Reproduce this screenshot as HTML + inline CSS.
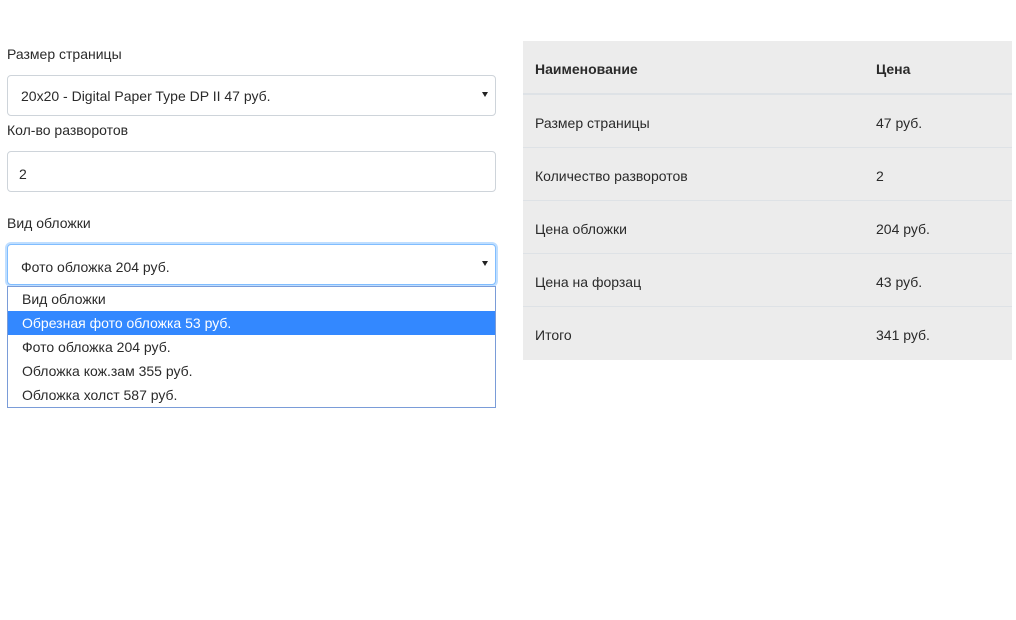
<!DOCTYPE html>
<html><head><meta charset="utf-8"><style>
body{margin:0;width:1016px;height:620px;background:#fff;font-family:"Liberation Sans","Noto Sans CJK SC",sans-serif;color:#2a2a2a;font-size:14px;position:relative;overflow:hidden}
.a{position:absolute;white-space:nowrap}
.box{position:absolute;left:7px;width:487px;border:1px solid #ced4da;border-radius:4px;background:#fff}
.arr{position:absolute;right:7px;top:16px;width:0;height:0;border-left:3px solid transparent;border-right:3px solid transparent;border-top:5px solid #222}
.opt{position:absolute;left:0;width:487px;height:24px;line-height:25px;padding-left:14px;box-sizing:border-box;font-size:14px}
.tb{position:absolute;left:523px;top:41px;width:489px;height:319px;background:#ececec}
.row{position:absolute;left:0;width:489px;border-top:2px solid #dee2e6}
</style></head><body>
<div class="a" style="left:7px;top:46px">Размер страницы</div>
<div class="box" style="top:75px;height:39px"><div class="a" style="left:13px;top:12px">20x20 - Digital Paper Type DP II 47 руб.</div><div class="arr"></div></div>
<div class="a" style="left:7px;top:122px">Кол-во разворотов</div>
<div class="box" style="top:151px;height:39px"><div class="a" style="left:11px;top:14px">2</div></div>
<div class="a" style="left:7px;top:215px">Вид обложки</div>
<div class="box" style="top:244px;height:39px;border-color:#80bdff;box-shadow:0 0 0 2px rgba(0,123,255,.25)"><div class="a" style="left:13px;top:14px">Фото обложка 204 руб.</div><div class="arr"></div></div>
<div style="position:absolute;left:7px;top:286px;width:487px;height:120px;border:1px solid #7a9cd8;background:#fff">
<div class="opt" style="top:0">Вид обложки</div>
<div class="opt" style="top:24px;background:#3388ff;color:#fff">Обрезная фото обложка 53 руб.</div>
<div class="opt" style="top:48px">Фото обложка 204 руб.</div>
<div class="opt" style="top:72px">Обложка кож.зам 355 руб.</div>
<div class="opt" style="top:96px">Обложка холст 587 руб.</div>
</div>
<div class="tb">
<div class="a" style="left:12px;top:20px;font-weight:bold">Наименование</div><div class="a" style="left:353px;top:20px;font-weight:bold">Цена</div>
<div class="row" style="top:52px"></div>
<div class="a" style="left:12px;top:74px">Размер страницы</div><div class="a" style="left:353px;top:74px">47 руб.</div>
<div class="row" style="top:106px;border-top-width:1px"></div>
<div class="a" style="left:12px;top:127px">Количество разворотов</div><div class="a" style="left:353px;top:127px">2</div>
<div class="row" style="top:159px;border-top-width:1px"></div>
<div class="a" style="left:12px;top:180px">Цена обложки</div><div class="a" style="left:353px;top:180px">204 руб.</div>
<div class="row" style="top:212px;border-top-width:1px"></div>
<div class="a" style="left:12px;top:233px">Цена на форзац</div><div class="a" style="left:353px;top:233px">43 руб.</div>
<div class="row" style="top:265px;border-top-width:1px"></div>
<div class="a" style="left:12px;top:286px">Итого</div><div class="a" style="left:353px;top:286px">341 руб.</div>
</div>
</body></html>
